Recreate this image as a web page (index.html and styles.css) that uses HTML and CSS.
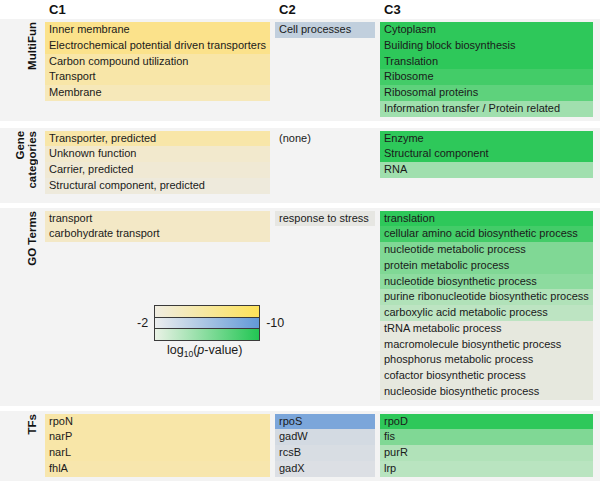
FILE: index.html
```html
<!DOCTYPE html>
<html>
<head>
<meta charset="utf-8">
<link rel="stylesheet" href="styles.css">
</head>
<body>
<div class="fig">
  <div class="head">
    <div></div>
    <div class="hc">C1</div>
    <div class="hc">C2</div>
    <div class="hc">C3</div>
  </div>

  <section class="panel p1">
    <div class="lab"><span>MultiFun</span></div>
    <div class="col">
      <div class="box">
        <div class="row y1">Inner membrane</div>
        <div class="row y1">Electrochemical potential driven transporters</div>
        <div class="row y2">Carbon compound utilization</div>
        <div class="row y2">Transport</div>
        <div class="row y3">Membrane</div>
      </div>
    </div>
    <div class="col">
      <div class="box">
        <div class="row b2">Cell processes</div>
      </div>
    </div>
    <div class="col">
      <div class="box">
        <div class="row g1">Cytoplasm</div>
        <div class="row g1">Building block biosynthesis</div>
        <div class="row g1">Translation</div>
        <div class="row g2">Ribosome</div>
        <div class="row g3">Ribosomal proteins</div>
        <div class="row g6">Information transfer / Protein related</div>
      </div>
    </div>
  </section>

  <section class="panel p2">
    <div class="lab"><span>Gene<br>categories</span></div>
    <div class="col">
      <div class="box">
        <div class="row y2">Transporter, predicted</div>
        <div class="row y5">Unknown function</div>
        <div class="row y6">Carrier, predicted</div>
        <div class="row y7">Structural component, predicted</div>
      </div>
    </div>
    <div class="col">
      <div class="box">
        <div class="row">(none)</div>
      </div>
    </div>
    <div class="col">
      <div class="box">
        <div class="row g1">Enzyme</div>
        <div class="row g1">Structural component</div>
        <div class="row g6">RNA</div>
      </div>
    </div>
  </section>

  <section class="panel p3">
    <div class="lab"><span>GO Terms</span></div>
    <div class="col">
      <div class="box">
        <div class="row y4">transport</div>
        <div class="row y4">carbohydrate transport</div>
      </div>
      <div class="legend">
        <div class="lg-row">
          <span class="lg-num">-2</span>
          <div class="bars">
            <div class="bar bar-y"></div>
            <div class="bar bar-b"></div>
            <div class="bar bar-g"></div>
          </div>
          <span class="lg-num">-10</span>
        </div>
        <div class="lg-cap">log<sub>10</sub>(<i>p</i>-value)</div>
      </div>
    </div>
    <div class="col">
      <div class="box">
        <div class="row n1">response to stress</div>
      </div>
    </div>
    <div class="col">
      <div class="box">
        <div class="row g1">translation</div>
        <div class="row g2">cellular amino acid biosynthetic process</div>
        <div class="row g4">nucleotide metabolic process</div>
        <div class="row g4">protein metabolic process</div>
        <div class="row g5">nucleotide biosynthetic process</div>
        <div class="row g7">purine ribonucleotide biosynthetic process</div>
        <div class="row g8">carboxylic acid metabolic process</div>
        <div class="row g9">tRNA metabolic process</div>
        <div class="row g9">macromolecule biosynthetic process</div>
        <div class="row g9">phosphorus metabolic process</div>
        <div class="row g9">cofactor biosynthetic process</div>
        <div class="row g9">nucleoside biosynthetic process</div>
      </div>
    </div>
  </section>

  <section class="panel p4">
    <div class="lab"><span>TFs</span></div>
    <div class="col">
      <div class="box">
        <div class="row y2">rpoN</div>
        <div class="row y2">narP</div>
        <div class="row y2">narL</div>
        <div class="row y2b">fhlA</div>
      </div>
    </div>
    <div class="col">
      <div class="box">
        <div class="row b1">rpoS</div>
        <div class="row b3">gadW</div>
        <div class="row b4">rcsB</div>
        <div class="row b5">gadX</div>
      </div>
    </div>
    <div class="col">
      <div class="box">
        <div class="row g1">rpoD</div>
        <div class="row g4">fis</div>
        <div class="row g7">purR</div>
        <div class="row g7b">lrp</div>
      </div>
    </div>
  </section>
</div>
</body>
</html>
```

FILE: styles.css
```css
html, body {
  margin: 0;
  padding: 0;
  background: #ffffff;
}

body {
  font-family: "Liberation Sans", Arial, sans-serif;
  font-size: 11px;
  color: #1a1a1a;
}

.fig {
  width: 600px;
}

.head,
.panel {
  display: grid;
  grid-template-columns: 40px 225px 100px 213px;
  column-gap: 5px;
}

.head {
  height: 19px;
}

.hc {
  font-weight: bold;
  font-size: 13px;
  line-height: 19px;
  padding-left: 4px;
  color: #111;
}

.panel {
  background: #f3f3f3;
  padding-top: 3px;
  margin-bottom: 6px;
}

.p1 { padding-bottom: 4px; margin-bottom: 7px; }
.p2 { padding-bottom: 9px; margin-bottom: 5px; }
.p3 { padding-bottom: 6px; margin-bottom: 5px; }
.p4 { padding-bottom: 5px; margin-bottom: 0; }

.lab {
  display: flex;
  justify-content: flex-end;
  align-items: flex-start;
  padding-right: 2px;
}

.lab span {
  writing-mode: vertical-rl;
  transform: rotate(180deg);
  text-align: right;
  font-weight: bold;
  font-size: 11.5px;
  line-height: 12px;
  color: #111;
}

.row {
  height: 15.75px;
  line-height: 15.75px;
  padding-left: 4px;
  white-space: nowrap;
}

/* yellow shades (C1) */
.y1 { background: #fbe28b; }
.y2 { background: #f8e6a8; }
.y2b { background: #f7e6ad; }
.y3 { background: #f6e8b9; }
.y4 { background: #f3e8c6; }
.y5 { background: #f2e9cd; }
.y6 { background: #f0e9d4; }
.y7 { background: #eeeadc; }

/* blue shades (C2) */
.b1 { background: #7ba6da; }
.b2 { background: #c1cfdd; }
.b3 { background: #d3dae2; }
.b4 { background: #d8dde3; }
.b5 { background: #dcdfe4; }
.n1 { background: #e6e6e2; }

/* green shades (C3) */
.g1 { background: #2ec85a; }
.g2 { background: #43cc68; }
.g3 { background: #5ed27c; }
.g4 { background: #80d895; }
.g5 { background: #8ddb9f; }
.g6 { background: #a0dfae; }
.g7 { background: #b1e2b9; }
.g7b { background: #b9e4c0; }
.g8 { background: #bde4c2; }
.g9 { background: #e6e8de; }

/* legend */
.legend {
  margin-top: 63px;
  margin-left: 92px;
  width: 150px;
}

.lg-row {
  display: flex;
  align-items: center;
  gap: 6px;
}

.lg-num {
  font-size: 12.5px;
  color: #1a1a1a;
}

.bars {
  width: 104px;
  border: 1px solid #3a3a3a;
  display: flex;
  flex-direction: column;
}

.bar {
  height: 10.5px;
}

.bar + .bar {
  border-top: 1px solid #3a3a3a;
}

.bar-y { background: linear-gradient(to right, #f0ede2, #fde258); }
.bar-b { background: linear-gradient(to right, #eceeee, #6299d8); }
.bar-g { background: linear-gradient(to right, #eaf2e6, #22c653); }

.lg-cap {
  font-size: 12.5px;
  margin-top: 2px;
  margin-left: 30px;
  color: #1a1a1a;
}

.lg-cap sub {
  font-size: 8.5px;
  vertical-align: -3px;
  line-height: 0;
}
```
